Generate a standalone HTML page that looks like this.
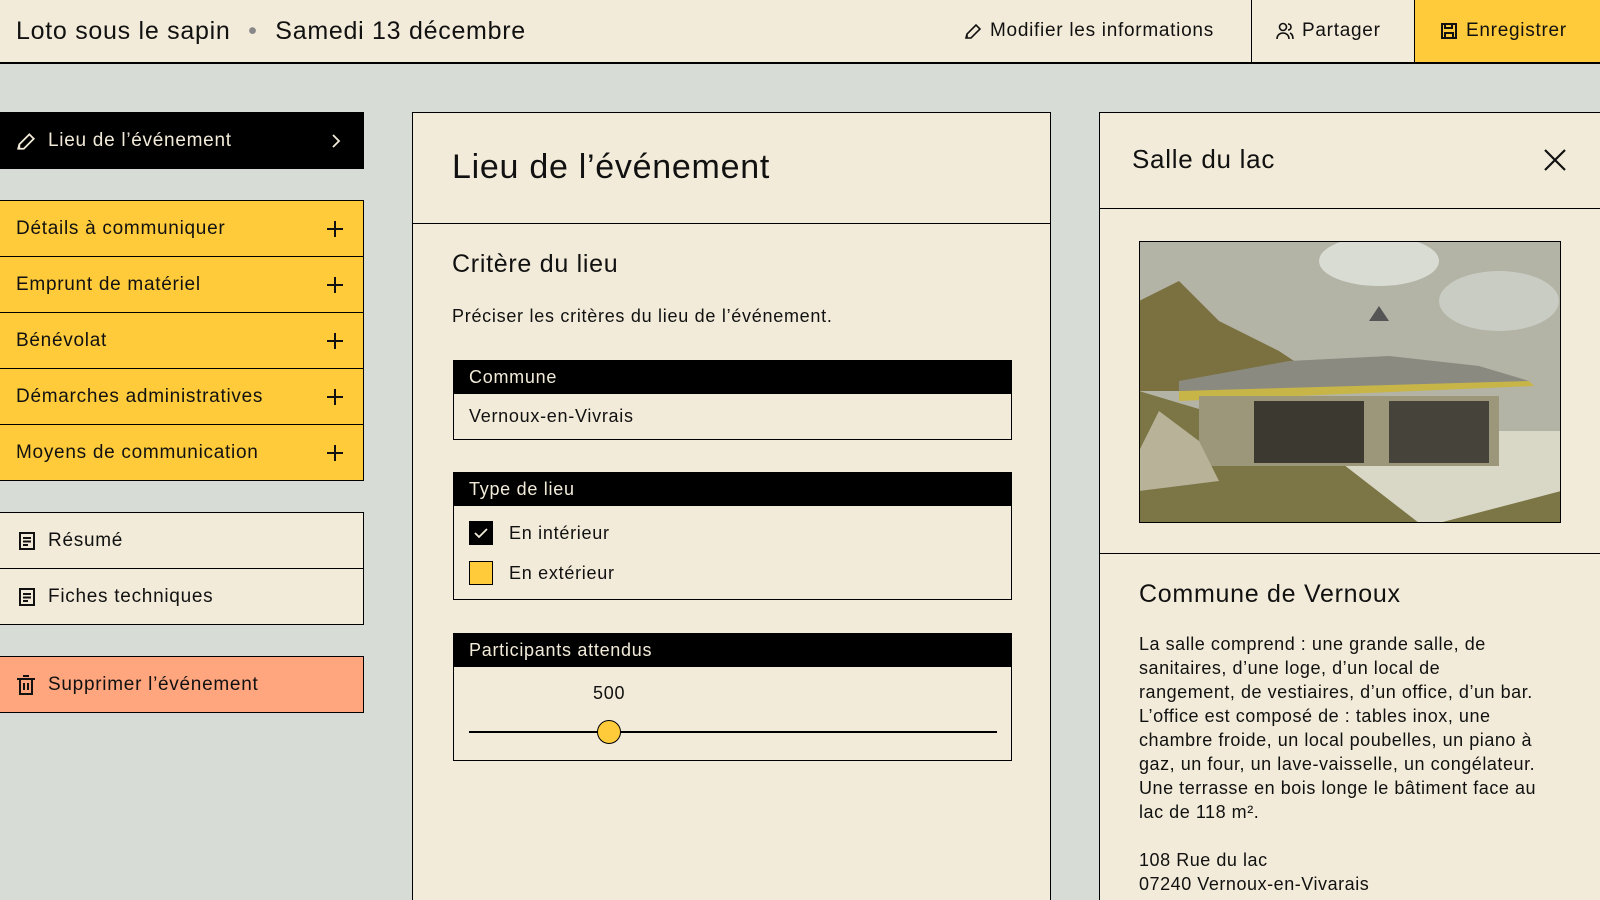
<!DOCTYPE html>
<html style="width:1600px;height:900px;overflow:hidden"><head><meta charset="utf-8"><style>
*{box-sizing:border-box;margin:0;padding:0}
body{width:1600px;height:900px;overflow:hidden;background:#d7dcd6;font-family:"Liberation Sans","DejaVu Sans",sans-serif;color:#111;position:relative;letter-spacing:0.045em}
.abs{position:absolute}
.hdr{left:0;top:0;width:1600px;height:64px;background:#f2ebd9;border-bottom:2px solid #000}
.hdr .t{left:16px;top:0;line-height:62px;font-size:25px}
.hb{top:0;height:62px;line-height:62px;font-size:19px;display:flex;align-items:center;gap:8px}
.nav{left:0;width:364px;height:57px;border:1px solid #000;border-left:none;display:flex;align-items:center;font-size:19px;padding-left:16px}
.yl{background:#ffcb3a}
.cr{background:#f2ebd9}
.plus{position:absolute;right:20px;top:20px;width:16px;height:16px}
.plus:before{content:"";position:absolute;left:7px;top:0;width:2px;height:16px;background:#111}
.plus:after{content:"";position:absolute;left:0;top:7px;width:16px;height:2px;background:#111}
.panel{background:#f2ebd9;border:1px solid #000}
.box{left:40px;width:559px;border:1px solid #000}
.bh{background:#000;color:#f2ebd9;height:33px;line-height:33px;padding-left:15px;font-size:18px}
.p{font-size:18px;line-height:24px}
</style></head><body>
<div class="abs hdr">
 <div class="abs t">Loto sous le sapin <span style="color:#888;margin:0 10px">•</span> Samedi 13 décembre</div>
 <div class="abs hb" style="left:964px"><svg width="18" height="18" viewBox="0 0 18 18" fill="none" stroke="#111" stroke-width="1.6"><path d="M2 16h5L16 7l-4-4-9 9z M3 16v-4"/></svg>Modifier les informations</div>
 <div class="abs" style="left:1251px;top:0;width:1px;height:62px;background:#000"></div>
 <div class="abs hb" style="left:1276px"><svg width="18" height="18" viewBox="0 0 18 18" fill="none" stroke="#111" stroke-width="1.6"><circle cx="7" cy="5" r="3.5"/><path d="M1 17c0-4 3-6 6-6s6 2 6 6M12 2c2 0 3 1.5 3 3s-1 3-3 3M14 11c2 1 3 3 3 6"/></svg>Partager</div>
 <div class="abs" style="left:1414px;top:0;width:186px;height:62px;background:#ffcb3a;border-left:1px solid #000"></div>
 <div class="abs hb" style="left:1440px"><svg width="18" height="18" viewBox="0 0 18 18" fill="none" stroke="#111" stroke-width="2"><rect x="2" y="2" width="14" height="14"/><path d="M5 2v4h7V2M5 16v-5h8v5"/></svg>Enregistrer</div>
</div>

<div class="abs nav" style="top:112px;background:#000;color:#f2ebd9;border-color:#000"><svg width="20" height="20" viewBox="0 0 18 18" fill="none" stroke="#f2ebd9" stroke-width="1.6" style="margin-right:12px"><path d="M2 16h5L16 7l-4-4-9 9z M3 16v-4"/></svg>Lieu de l’événement<svg class="abs" style="right:22px;top:21px" width="10" height="14" viewBox="0 0 10 14" fill="none" stroke="#f2ebd9" stroke-width="1.8"><path d="M2 1l6 6-6 6"/></svg></div>
<div class="abs nav yl" style="top:200px">Détails à communiquer<span class="plus"></span></div>
<div class="abs nav yl" style="top:256px">Emprunt de matériel<span class="plus"></span></div>
<div class="abs nav yl" style="top:312px">Bénévolat<span class="plus"></span></div>
<div class="abs nav yl" style="top:368px">Démarches administratives<span class="plus"></span></div>
<div class="abs nav yl" style="top:424px">Moyens de communication<span class="plus"></span></div>
<div class="abs nav cr" style="top:512px"><svg width="18" height="20" viewBox="0 0 18 20" fill="none" stroke="#111" stroke-width="2" style="margin:0 12px 0 2px"><rect x="2" y="2" width="14" height="16"/><path d="M5 7h8M5 10.5h8M5 14h5"/></svg>Résumé</div>
<div class="abs nav cr" style="top:568px"><svg width="18" height="20" viewBox="0 0 18 20" fill="none" stroke="#111" stroke-width="2" style="margin:0 12px 0 2px"><rect x="2" y="2" width="14" height="16"/><path d="M5 7h8M5 10.5h8M5 14h5"/></svg>Fiches techniques</div>
<div class="abs nav" style="top:656px;background:#ffa67e"><svg width="20" height="20" viewBox="0 0 20 20" fill="none" stroke="#111" stroke-width="2" style="margin:0 12px 0 0"><path d="M1 4h18M7 1h6M4 4v15h12V4M8 8v7M12 8v7"/></svg>Supprimer l’événement</div>

<div class="abs panel" style="left:412px;top:112px;width:639px;height:800px">
 <div class="abs" style="left:0;top:0;width:637px;height:111px;border-bottom:1px solid #000"></div>
 <div class="abs" style="left:39px;top:34px;font-size:34px;line-height:40px">Lieu de l’événement</div>
 <div class="abs" style="left:39px;top:136px;font-size:25px;line-height:30px">Critère du lieu</div>
 <div class="abs p" style="left:39px;top:191px">Préciser les critères du lieu de l’événement.</div>
 <div class="abs box" style="top:247px;height:80px"><div class="bh">Commune</div><div class="p" style="padding:10px 15px">Vernoux-en-Vivrais</div></div>
 <div class="abs box" style="top:359px;height:128px"><div class="bh">Type de lieu</div>
  <div class="abs" style="left:15px;top:48px;width:24px;height:24px;background:#000"><svg width="24" height="24" viewBox="0 0 24 24" fill="none" stroke="#f2ebd9" stroke-width="1.8"><path d="M6 12l4 4 8-8"/></svg></div>
  <div class="abs p" style="left:55px;top:48px">En intérieur</div>
  <div class="abs" style="left:15px;top:88px;width:24px;height:24px;background:#ffcb3a;border:1px solid #000"></div>
  <div class="abs p" style="left:55px;top:88px">En extérieur</div>
 </div>
 <div class="abs box" style="top:520px;height:128px"><div class="bh">Participants attendus</div>
  <div class="abs p" style="left:139px;top:47px">500</div>
  <div class="abs" style="left:15px;top:97px;width:528px;height:2px;background:#000"></div>
  <div class="abs" style="left:143px;top:86px;width:24px;height:24px;border-radius:50%;background:#ffcb3a;border:1px solid #000"></div>
 </div>
</div>

<div class="abs panel" style="left:1099px;top:112px;width:520px;height:800px">
 <div class="abs" style="left:0;top:0;width:520px;height:96px;border-bottom:1px solid #000"></div>
 <div class="abs" style="left:32px;top:30px;font-size:26px;line-height:32px">Salle du lac</div>
 <svg class="abs" style="left:443px;top:35px" width="24" height="24" viewBox="0 0 24 24" stroke="#111" stroke-width="2.2"><path d="M2 2l20 20M22 2L2 22"/></svg>
 <svg class="abs" style="left:39px;top:128px" width="422" height="282" viewBox="0 0 422 282">
  <rect width="422" height="282" fill="#b3b3a6"/>
  <ellipse cx="240" cy="20" rx="60" ry="25" fill="#d8dcd3"/><ellipse cx="360" cy="60" rx="60" ry="30" fill="#c8ccc3"/>
  <path d="M0 60 L40 40 L80 80 L140 110 L200 150 L0 150z" fill="#7a7040"/>
  <path d="M0 150 L0 282 L422 282 L422 240 L250 200 L100 180z" fill="#7c7545"/>
  <path d="M120 190 L422 190 L422 250 L300 282 L280 282 L200 220z" fill="#d9d8c6"/>
  <path d="M40 140 L150 120 L250 115 L340 125 L390 140 L360 145 L40 150z" fill="#8a8a80"/>
  <path d="M40 150 L390 140 L395 145 L40 160z" fill="#c7b548"/>
  <rect x="60" y="155" width="300" height="70" fill="#9c967a"/>
  <rect x="115" y="160" width="110" height="62" fill="#3c3a30"/>
  <rect x="250" y="160" width="100" height="62" fill="#46443a"/>
  <path d="M0 210 L20 170 L60 200 L80 240 L0 250z" fill="#b8b299"/>
  <path d="M230 80 L240 65 L250 80z" fill="#555"/>
  <rect x="0.5" y="0.5" width="421" height="281" fill="none" stroke="#000"/>
 </svg>
 <div class="abs" style="left:0;top:440px;width:520px;height:1px;background:#000"></div>
 <div class="abs" style="left:39px;top:466px;font-size:25px;line-height:30px">Commune de Vernoux</div>
 <div class="abs p" style="left:39px;top:519px;width:470px;white-space:nowrap;letter-spacing:0.03em">La salle comprend : une grande salle, de<br>sanitaires, d’une loge, d’un local de<br>rangement, de vestiaires, d’un office, d’un bar.<br>L’office est composé de : tables inox, une<br>chambre froide, un local poubelles, un piano à<br>gaz, un four, un lave-vaisselle, un congélateur.<br>Une terrasse en bois longe le bâtiment face au<br>lac de 118 m².<br><br>108 Rue du lac<br>07240 Vernoux-en-Vivarais</div>
</div>
</body></html>
